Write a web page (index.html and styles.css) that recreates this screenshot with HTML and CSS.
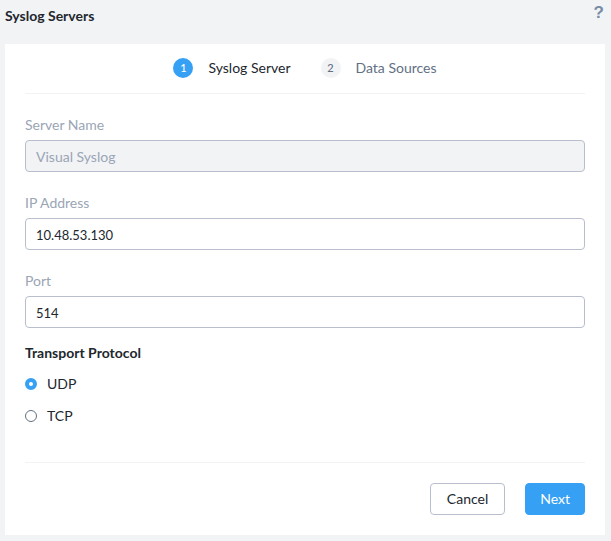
FILE: index.html
```html
<!DOCTYPE html>
<html lang="en">
<head>
<meta charset="utf-8">
<meta name="viewport" content="width=device-width, initial-scale=1">
<title>Syslog Servers</title>
<link rel="stylesheet" href="styles.css">
</head>
<body>
<header class="page-header">
  <h1 class="page-title">Syslog Servers</h1>
  <button class="help" type="button">?</button>
</header>
<main class="card">
  <ol class="steps">
    <li class="step step-active"><span class="step-number">1</span><span>Syslog Server</span></li>
    <li class="step"><span class="step-number">2</span><span>Data Sources</span></li>
  </ol>
  <form>
    <div class="fields">
      <div class="field">
        <label for="name">Server Name</label>
        <input class="text-input" id="name" type="text" value="Visual Syslog" disabled>
      </div>
      <div class="field">
        <label for="ip">IP Address</label>
        <input class="text-input text-input-numeric" id="ip" type="text" value="10.48.53.130">
      </div>
      <div class="field">
        <label for="port">Port</label>
        <input class="text-input text-input-numeric" id="port" type="text" value="514">
      </div>
    </div>
    <fieldset class="protocol">
      <legend>Transport Protocol</legend>
      <label class="option"><input class="radio" type="radio" name="protocol" checked><span>UDP</span></label>
      <label class="option"><input class="radio" type="radio" name="protocol"><span>TCP</span></label>
    </fieldset>
    <footer class="actions">
      <button class="button" type="button">Cancel</button>
      <button class="button button-primary" type="submit">Next</button>
    </footer>
  </form>
</main>
</body>
</html>
```

FILE: styles.css
```css
* {
  box-sizing: border-box;
}

body {
  margin: 0;
  padding: 0 6px 6px 5px;
  background: #f2f3f5;
  color: #22272e;
  font: 14px/20px Lato, "Liberation Sans", sans-serif;
}

.page-header {
  display: flex;
  justify-content: space-between;
  align-items: flex-start;
  height: 44px;
}

.page-title {
  margin: 6px 0 0;
  font-size: 14px;
  line-height: 20px;
  font-weight: 700;
}

.help {
  margin: 3px 1px 0 0;
  padding: 0;
  border: 0;
  background: none;
  color: #798ca5;
  font: 700 17px/20px "Liberation Sans", sans-serif;
}

.card {
  padding: 14px 20px 20px;
  background: #fff;
}

.steps {
  display: flex;
  justify-content: center;
  gap: 30px;
  margin: 0;
  padding: 0 0 15px;
  border-bottom: 1px solid #f2f3f5;
  list-style: none;
}

.step {
  display: flex;
  gap: 15px;
  color: #627084;
}

.step-active {
  color: #22272e;
}

.step-number {
  width: 20px;
  height: 20px;
  border-radius: 50%;
  background: #f2f3f5;
  font-size: 11px;
  font-weight: 500;
  text-align: center;
}

.step-active .step-number {
  background: #36a0f4;
  color: #fff;
}

.fields {
  display: grid;
  gap: 21px;
  padding-top: 21px;
}

.field {
  display: grid;
  gap: 5px;
  color: #9aa5b5;
}

.text-input {
  width: 100%;
  height: 32px;
  padding: 1px 10px 0;
  border: 1px solid #b8bece;
  border-radius: 4px;
  background: #fff;
  color: #22272e;
  font: inherit;
}

.text-input-numeric {
  font-size: 13px;
}

.text-input:disabled {
  background: #f2f3f5;
  color: #9aa5b5;
}

.protocol {
  display: grid;
  gap: 12px;
  min-width: 0;
  margin: 15px 0 0;
  padding: 0;
  border: 0;
}

.protocol legend {
  margin-bottom: 11px;
  padding: 0;
  font-size: 14px;
  font-weight: 700;
}

.option {
  display: flex;
  align-items: center;
  gap: 10px;
}

.radio {
  appearance: none;
  width: 12px;
  height: 12px;
  margin: 0;
  border: 1px solid #627084;
  border-radius: 50%;
  background: #fff;
}

.radio:checked {
  border: 4px solid #36a0f4;
}

.actions {
  display: flex;
  justify-content: flex-end;
  gap: 20px;
  margin-top: 36px;
  padding-top: 20px;
  border-top: 1px solid #f2f3f5;
}

.button {
  height: 32px;
  padding: 0 16px;
  border: 1px solid #b8bece;
  border-radius: 4px;
  background: #fff;
  color: #22272e;
  font: inherit;
}

.button-primary {
  padding: 0 14px;
  border-color: #36a0f4;
  background: #36a0f4;
  color: #fff;
}
```
